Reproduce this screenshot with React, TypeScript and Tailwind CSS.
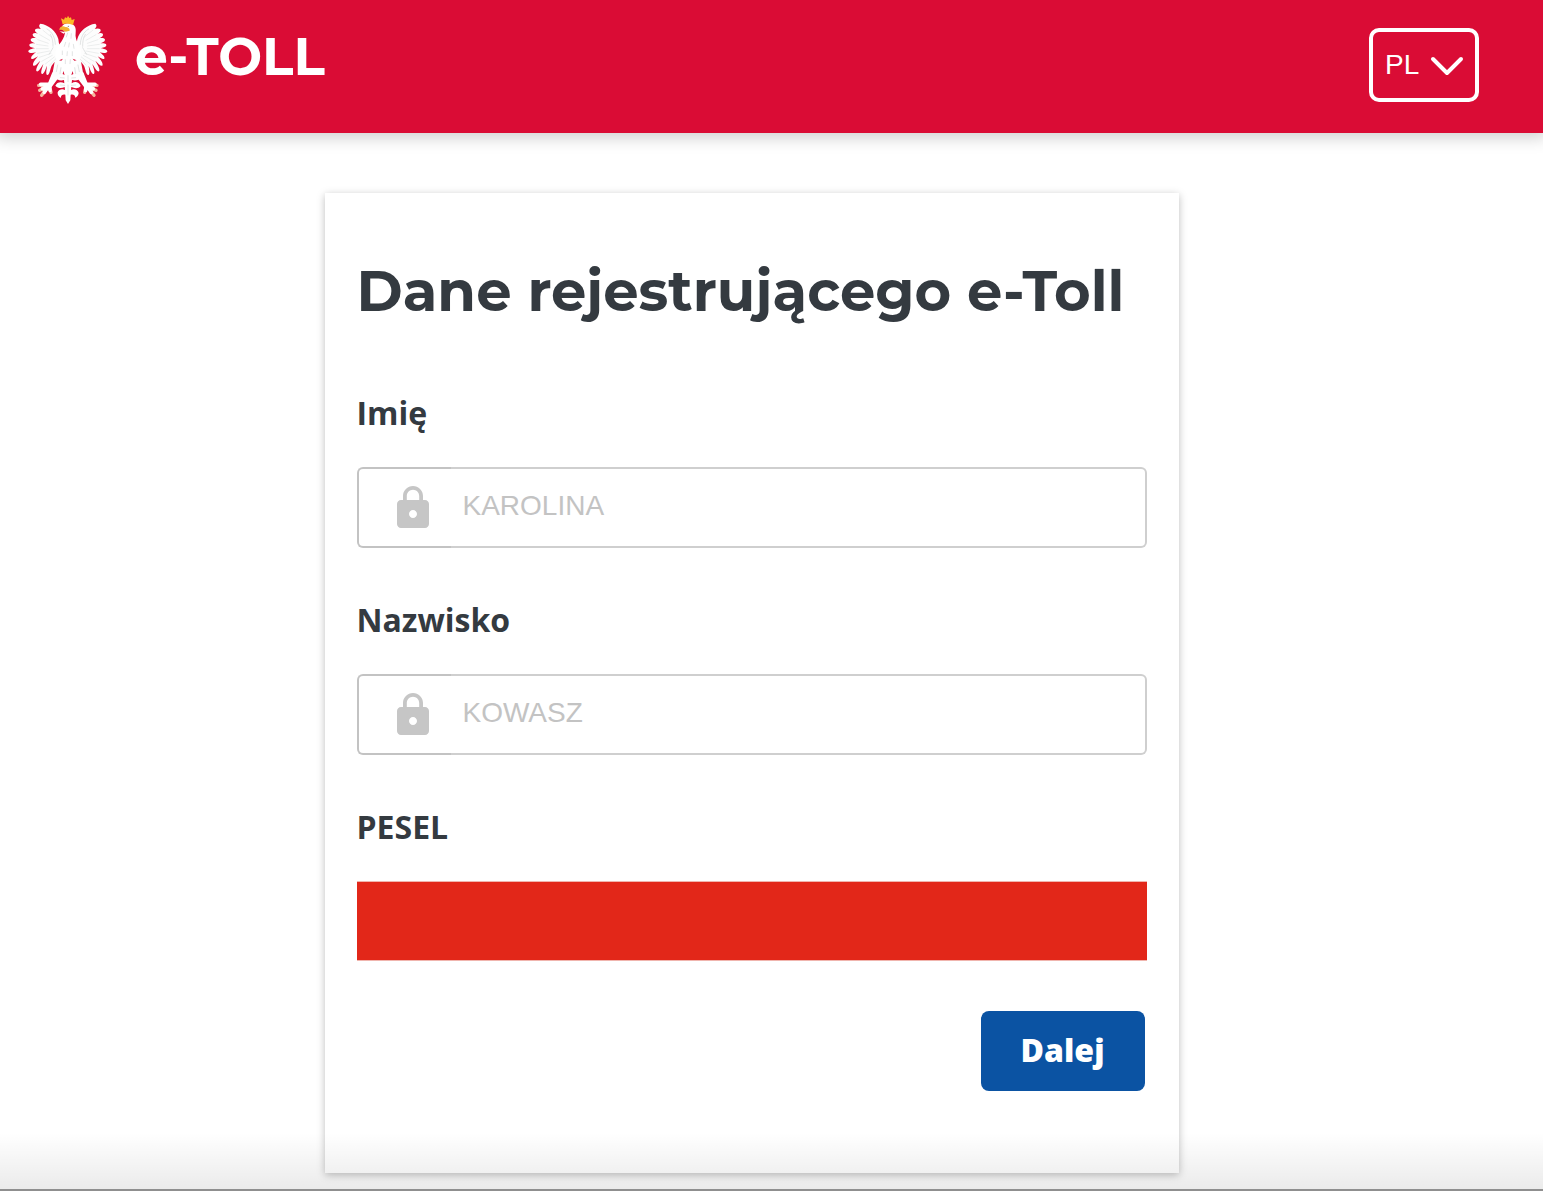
import React from "react";
import { MdLock } from "react-icons/md";

const Wing = () => {
  return (
    <>
      <path
        d="M146 136 C132 130 132 114 130 102 C124 78 100 59 76 56 C70 61 73 67 78 72 C68 68 59 71 60 77 C61 81 66 84 70 86 C60 82 52 84 53 90 C54 95 60 98 65 100 C56 98 47 99 47 105 C48 110 55 113 61 115 C52 115 43 115 43 121 C44 127 53 129 61 129 C52 131 39 134 40 140 C43 145 54 144 63 142 C55 148 46 156 49 161 C53 164 61 159 69 154 C61 163 51 176 55 182 C60 184 68 175 76 167 C70 178 60 194 65 199 C71 201 78 188 85 177 C82 188 75 204 81 207 C87 207 91 194 96 182 C95 193 91 208 97 210 C104 209 105 194 110 182 L119 170 L112 208 L124 222 L136 216 L148 220 L158 190 L158 138 Z"
        fill="#fdfdfd"
      />
      <path
        d="M84 76 L110 97 M74 89 L104 106 M68 104 L100 115 M64 118 L99 123 M64 131 L100 131 M67 145 L104 138 M73 157 L108 145 M80 169 L112 151 M91 177 L118 156 M104 180 L122 162"
        stroke="#e3e6e6"
        strokeWidth="2"
        strokeLinecap="round"
        fill="none"
      />
      <path
        d="M96 72 C114 82 120 100 121 118 M106 88 C113 98 114 112 114 124 M114 128 C110 136 106 142 102 148"
        stroke="#d3d7d7"
        strokeWidth="2"
        strokeLinecap="round"
        fill="none"
      />
    </>
  );
};

const Leg = () => {
  return (
    <>
      <g fill="none" strokeLinecap="round" strokeLinejoin="round">
        <path
          d="M98 240 L71 241 M96 246 L74 256 M98 247 L80 271 M104 246 L108 262"
          stroke="#f5b8a0"
          strokeWidth="10"
        />
        <path
          d="M100 238 L77 238 M98 245 L82 251 M99 246 L88 262 M104 245 L105 256"
          stroke="#fff"
          strokeWidth="11"
        />
      </g>
      <path
        d="M112 202 L134 214 L110 246 C104 252 94 246 97 239 Z"
        fill="#fff"
      />
    </>
  );
};

const Eagle = () => {
  return (
    <svg
      viewBox="36 30 243 270"
      className="w-[81px] h-[90px] shrink-0"
      role="img"
      aria-label="Godło Polski"
    >
      <Leg />
      <Wing />
      <g transform="matrix(-1 0 0 1 317 0)">
        <Leg />
        <Wing />
      </g>

      {/* head, neck and body */}
      <path
        d="M140 68 C143 57 153 54 164 55 C178 57 184 68 182 82 C180 96 184 108 193 124 C203 142 197 168 180 187 L175 205 L143 205 L137 187 C122 168 115 142 128 124 C138 112 148 100 150 82 Z"
        fill="#fff"
      />

      {/* tail */}
      <path
        d="M147 188 L172 188 L169 213 C179 206 192 208 199 218 C193 226 180 228 171 225 L170 235 C180 228 192 231 197 243 C190 252 178 250 169 246 L168 255 C177 250 189 254 191 264 C190 272 186 276 181 278 C180 269 174 267 167 269 L166 286 L159 297 L152 286 L151 269 C144 267 138 270 137 279 C131 275 127 270 128 262 C131 253 142 251 150 255 L149 246 C140 251 128 251 121 242 C126 230 139 229 148 235 L147 225 C138 228 125 226 119 217 C126 207 140 207 149 213 Z"
        fill="#fff"
      />

      {/* feather shading */}
      <g fill="none" stroke="#d3d7d7" strokeWidth="2" strokeLinecap="round">
        <path d="M158 84 L154 96 M169 86 L168 100 M152 112 L148 124 M163 114 L161 126 M175 118 L177 130 M142 138 L142 149 M157 140 L156 152 M172 140 L172 152 M151 164 L151 176 M166 164 L165 176" />
        <path d="M128 180 L124 200 M138 188 L135 206 M189 180 L193 200 M179 188 L182 206 M159 212 L159 230 M159 240 L159 270 M136 218 L148 219 M182 218 L170 219 M136 240 L149 241 M182 240 L169 241" />
      </g>
      <g fill="#da0c35">
        <path d="M132 166 L144 161 L139 167 Z M185 166 L173 161 L178 167 Z" />
        <path d="M145 198 L149 210 L143 207 Z M173 198 L169 210 L175 207 Z" />
      </g>

      {/* beak and crown */}
      <path
        d="M151 66 C142 61 133 66 133 76 C141 72 144 77 152 80 L164 77 C165 70 158 66 151 66 Z"
        fill="#f2b233"
      />
      <path d="M134 79 L151 81 L146 86 Z" fill="#fff" />
      <circle cx="160" cy="64" r="2" fill="#8b8175" />
      <path
        d="M143 58 L138 40 L147 44 L150 37 L156 39 L159 32 L163 39 L168 37 L170 45 L179 42 L174 60 C163 55 153 54 143 58 Z"
        fill="#fdb827"
      />
    </svg>
  );
};

const Header = () => {
  return (
    <header className="relative flex items-start justify-between w-full h-[133px] pl-[27px] pr-16 bg-[#da0c35] text-white shadow-[0_0_16px_4px_rgba(0,0,0,0.2)]">
      <div className="flex items-start gap-[27px] pt-[15px]">
        <Eagle />
        <span className="font-[Montserrat,Inter,sans-serif] text-[52px] leading-[84px] font-bold">
          e-TOLL
        </span>
      </div>

      <div className="relative mt-7">
        <select
          aria-label="Język"
          className="block appearance-none w-[110px] h-[74px] pl-3 border-4 border-white rounded-[10px] bg-transparent font-['Liberation_Sans',Arial,sans-serif] text-[28px]"
        >
          <option>PL</option>
        </select>
        <svg
          viewBox="0 0 34 20"
          className="absolute right-[15px] top-[28px] w-[34px] h-5 pointer-events-none"
          fill="none"
          stroke="currentColor"
          strokeWidth="4"
          strokeLinecap="round"
          strokeLinejoin="round"
        >
          <path d="M3 3 L17 17 L31 3" />
        </svg>
      </div>
    </header>
  );
};

type LockedFieldProps = {
  id: string;
  label: string;
  value: string;
};

const LockedField = ({ id, label, value }: LockedFieldProps) => {
  return (
    <div className="flex flex-col gap-[30px]">
      <label htmlFor={id} className="text-[32px] leading-[48px] font-bold">
        {label}
      </label>
      <div className="flex h-[81px]">
        <span className="flex items-center w-[94px] pl-[30px] shrink-0 border-2 border-r-0 border-[#c3c3c3] rounded-l-md text-[#c6c6c6]">
          <MdLock size={48} />
        </span>
        <input
          id={id}
          type="text"
          value={value}
          readOnly
          className="grow min-w-0 pl-3 pb-1 border-2 border-l-0 border-[#cfcfcf] rounded-r-md font-['Liberation_Sans',Arial,sans-serif] text-[28px] text-[#c3c3c3]"
        />
      </div>
    </div>
  );
};

const App = () => {
  return (
    <div className="relative flex flex-col min-h-screen overflow-x-clip border-b-2 border-[#8f8f8f] bg-white text-[#343a40] font-['Open_Sans',sans-serif]">
      <Header />

      <main className="w-full pt-[60px] pb-4 pr-10">
        <form className="w-full max-w-[854px] mx-auto px-8 pt-16 pb-[82px] bg-white shadow-[0_2px_8px_rgba(0,0,0,0.26)]">
          <h1 className="font-[Montserrat,Inter,sans-serif] text-[56px] leading-[68px] font-bold">
            Dane rejestrującego e-Toll
          </h1>

          <div className="flex flex-col gap-12 mt-16">
            <LockedField id="imie" label="Imię" value="KAROLINA" />
            <LockedField id="nazwisko" label="Nazwisko" value="KOWASZ" />

            <div className="flex flex-col gap-[30px]">
              <label
                htmlFor="pesel"
                className="text-[32px] leading-[48px] font-bold"
              >
                PESEL
              </label>
              <input
                id="pesel"
                type="text"
                readOnly
                className="w-full h-20 border-y border-[#f0b5ae] bg-[#e22719]"
              />
            </div>
          </div>

          <div className="flex justify-end mt-[50px] pr-0.5">
            <button
              type="button"
              className="h-20 px-10 pb-0.5 rounded-lg bg-[#0b53a3] text-[32px] font-extrabold text-white"
            >
              Dalej
            </button>
          </div>
        </form>
      </main>

      <div className="absolute inset-x-0 bottom-0 h-14 bg-linear-to-b from-transparent to-black/8 pointer-events-none" />
    </div>
  );
};

export default App;
